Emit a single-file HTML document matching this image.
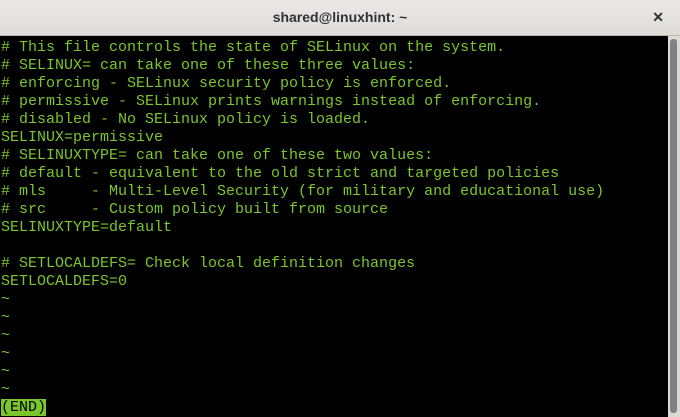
<!DOCTYPE html>
<html><head><style>
html,body{margin:0;padding:0;width:680px;height:417px;overflow:hidden;background:#000}
.tb{position:absolute;left:0;top:0;width:680px;height:35px;background:linear-gradient(#ebe9e7,#dedbd8);border-bottom:1px solid #bcb8b3;font-family:"Liberation Sans",sans-serif;font-size:14px;font-weight:bold;color:#2e3436;text-align:center;line-height:35px}
.x{position:absolute;right:16px;top:0;font-size:14px;color:#2e3436;font-weight:bold}
.term{position:absolute;left:1px;top:39px;width:667px;height:378px;font-family:"Liberation Mono",monospace;font-size:15px;line-height:18px;color:#7ac62b;white-space:pre}
.sb{position:absolute;left:668px;top:36px;width:12px;height:381px;background:#dcdad5}
.th{position:absolute;left:2px;top:3px;width:7px;height:374px;background:#7f8283;border-radius:3px}
.end{background:#7ac62b;color:#000}
</style></head><body>
<div class="tb">shared@linuxhint: ~<span class="x">✕</span></div>
<div class="term"># This file controls the state of SELinux on the system.
# SELINUX= can take one of these three values:
# enforcing - SELinux security policy is enforced.
# permissive - SELinux prints warnings instead of enforcing.
# disabled - No SELinux policy is loaded.
SELINUX=permissive
# SELINUXTYPE= can take one of these two values:
# default - equivalent to the old strict and targeted policies
# mls     - Multi-Level Security (for military and educational use)
# src     - Custom policy built from source
SELINUXTYPE=default

# SETLOCALDEFS= Check local definition changes
SETLOCALDEFS=0
~
~
~
~
~
~
<span class="end">(END)</span></div>
<div class="sb"><div class="th"></div></div>
</body></html>
